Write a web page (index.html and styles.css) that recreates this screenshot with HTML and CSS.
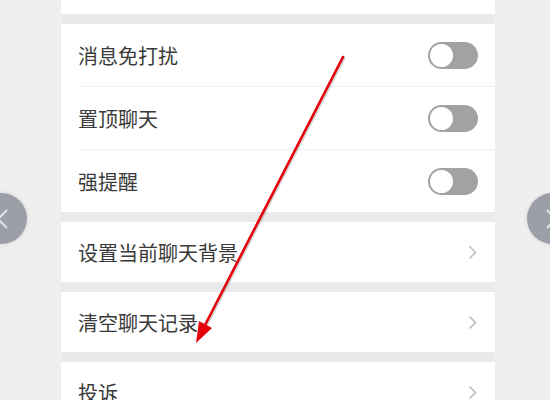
FILE: index.html
```html
<!DOCTYPE html>
<html lang="zh-CN">
<head>
  <meta charset="UTF-8" />
  <meta name="viewport" content="width=device-width, initial-scale=1" />
  <title>聊天信息</title>
  <link rel="stylesheet" href="styles.css">
</head>
<body>
  <div class="panel">
    <div class="card top"></div>

    <div class="card">
      <div class="row">
        <span class="label">消息免打扰</span>
        <span class="switch"><span class="knob"></span></span>
      </div>
      <div class="row">
        <span class="label">置顶聊天</span>
        <span class="switch"><span class="knob"></span></span>
      </div>
      <div class="row last">
        <span class="label">强提醒</span>
        <span class="switch"><span class="knob"></span></span>
      </div>
    </div>

    <div class="card">
      <div class="row single">
        <span class="label">设置当前聊天背景</span>
        <svg class="chevron" width="9" height="15" viewBox="0 0 9 15"><polyline points="1.5,1.5 7.5,7.5 1.5,13.5" /></svg>
      </div>
    </div>

    <div class="card">
      <div class="row single">
        <span class="label">清空聊天记录</span>
        <svg class="chevron" width="9" height="15" viewBox="0 0 9 15"><polyline points="1.5,1.5 7.5,7.5 1.5,13.5" /></svg>
      </div>
    </div>

    <div class="card">
      <div class="row single">
        <span class="label">投诉</span>
        <svg class="chevron" width="9" height="15" viewBox="0 0 9 15"><polyline points="1.5,1.5 7.5,7.5 1.5,13.5" /></svg>
      </div>
    </div>
  </div>

  <div class="nav prev">
    <svg width="14" height="22" viewBox="0 0 14 22"><polyline points="12,2 3,11 12,20" /></svg>
  </div>
  <div class="nav next">
    <svg width="14" height="22" viewBox="0 0 14 22"><polyline points="2,2 11,11 2,20" /></svg>
  </div>

  <!-- annotation arrow drawn over the screenshot -->
  <svg class="arrow" width="550" height="400" viewBox="0 0 550 400">
    <line class="shade" x1="344" y1="58" x2="204" y2="330" />
    <line x1="343" y1="57" x2="203" y2="329" />
    <polygon points="196,343 199,321 212,328" />
  </svg>
</body>
</html>
```

FILE: styles.css
```css
html, body {
  margin: 0;
  padding: 0;
  height: 100%;
  overflow: hidden;
}

body {
  width: 550px;
  height: 400px;
  position: relative;
  background-color: #efefef;
  font-family: "Noto Sans CJK SC", "Noto Sans", sans-serif;
  color: #3a3a3a;
}

.panel {
  width: 434px;
  margin-left: 61px;
  display: flex;
  flex-direction: column;
  gap: 10px;
  background-color: #eaeaea;
  height: 100%;
}

.card {
  flex-shrink: 0;
  background-color: #fff;
}

.card.top {
  height: 14px;
}

.row {
  height: 62px;
  margin-left: 17px;
  padding-right: 17px;
  display: flex;
  align-items: center;
  justify-content: space-between;
  border-bottom: 1px solid #f0f0f0;
}

.row.last,
.row.single {
  border-bottom: none;
}

.row.single {
  height: 60px;
}

.label {
  font-size: 20px;
  line-height: 1;
  padding-top: 2px;
}

.switch {
  width: 50px;
  height: 27px;
  border-radius: 14px;
  background-color: #a2a2a2;
  display: flex;
  align-items: center;
  padding-left: 2px;
  box-sizing: border-box;
}

.knob {
  width: 23px;
  height: 23px;
  border-radius: 50%;
  background-color: #fff;
}

.chevron {
  margin-right: 1px;
}

.chevron polyline {
  fill: none;
  stroke: #bdbdbd;
  stroke-width: 1.6;
}

.nav {
  position: absolute;
  top: 193px;
  width: 51px;
  height: 51px;
  border-radius: 50%;
  background-color: #9c9ea8;
  box-shadow: 0 0 4px rgba(0, 0, 0, 0.12);
  display: flex;
  align-items: center;
  box-sizing: border-box;
}

.nav.prev {
  left: -24px;
  justify-content: flex-end;
  padding-right: 18px;
}

.nav.next {
  left: 527px;
  padding-left: 18px;
}

.nav polyline {
  fill: none;
  stroke: #e4e5ea;
  stroke-width: 2;
}

.arrow {
  position: absolute;
  left: 0;
  top: 0;
  pointer-events: none;
}

.arrow line {
  stroke: #e5000a;
  stroke-width: 2.6;
  stroke-linecap: round;
}

.arrow line.shade {
  stroke: rgba(80, 80, 80, 0.25);
  stroke-width: 3;
}

.arrow polygon {
  fill: #e5000a;
}
```
